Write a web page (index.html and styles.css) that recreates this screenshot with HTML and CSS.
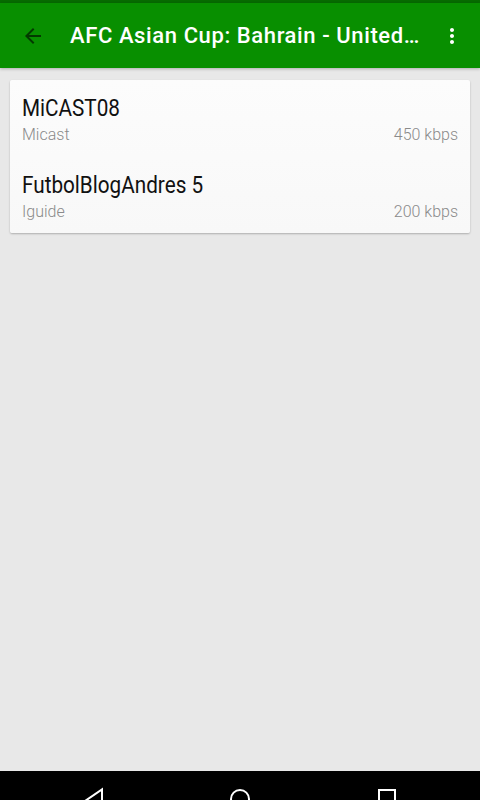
FILE: index.html
```html
<!DOCTYPE html>
<html lang="en">

<head>
    <meta charset="UTF-8">
    <meta name="viewport" content="width=device-width, initial-scale=1.0">
    <title>Streams</title>
    <link rel="stylesheet" href="styles.css">
</head>

<body>
    <div class="status-bar"></div>

    <div class="toolbar">
        <div class="nav-icon">
            <svg width="24" height="24" viewBox="0 0 24 24">
                <path d="M20 11H7.83l5.59-5.59L12 4l-8 8 8 8 1.41-1.41L7.83 13H20v-2z" fill="rgba(0,0,0,0.6)"/>
            </svg>
        </div>
        <div class="toolbar-title">AFC Asian Cup: Bahrain - United…</div>
        <div class="menu-icon">
            <svg width="24" height="24" viewBox="0 0 24 24">
                <path d="M12 8c1.1 0 2-.9 2-2s-.9-2-2-2-2 .9-2 2 .9 2 2 2zm0 2c-1.1 0-2 .9-2 2s.9 2 2 2 2-.9 2-2-.9-2-2-2zm0 6c-1.1 0-2 .9-2 2s.9 2 2 2 2-.9 2-2-.9-2-2-2z" fill="white"/>
            </svg>
        </div>
    </div>

    <div class="content">
        <div class="card">
            <div class="stream">
                <div class="stream-name">MiCAST08</div>
                <div class="stream-info">
                    <span>Micast</span>
                    <span>450 kbps</span>
                </div>
            </div>
            <div class="stream">
                <div class="stream-name">FutbolBlogAndres 5</div>
                <div class="stream-info">
                    <span>Iguide</span>
                    <span>200 kbps</span>
                </div>
            </div>
        </div>
    </div>

    <div class="nav-bar">
        <svg width="480" height="29" viewBox="0 0 480 29">
            <path d="M85 30 L102 18.5 L102 32" fill="none" stroke="white" stroke-width="2"/>
            <circle cx="240" cy="28" r="9" fill="none" stroke="white" stroke-width="2"/>
            <rect x="379" y="19" width="16" height="16" fill="none" stroke="white" stroke-width="2"/>
        </svg>
    </div>
</body>

</html>
```

FILE: styles.css
```css
* {
    box-sizing: border-box;
    margin: 0;
    padding: 0;
    font-family: Roboto, "Noto Sans", sans-serif;
}

body {
    width: 480px;
    height: 800px;
    display: flex;
    flex-direction: column;
    background: #e8e8e8;
    overflow: hidden;
}

.status-bar {
    height: 3px;
    background: #066b00;
}

.toolbar {
    height: 65px;
    display: flex;
    align-items: center;
    background: #088f00;
    box-shadow: 0 1px 3px rgba(0, 0, 0, 0.25);
    position: relative;
    z-index: 1;
}

.nav-icon {
    width: 70px;
    padding-left: 21px;
    display: flex;
}

.toolbar-title {
    flex: 1;
    color: white;
    font-size: 22px;
    font-weight: 500;
    letter-spacing: 0.6px;
    white-space: nowrap;
    padding-bottom: 1px;
}

.menu-icon {
    width: 56px;
    display: flex;
    justify-content: center;
}

.content {
    flex: 1;
    padding: 12px 10px;
}

.card {
    background: linear-gradient(#fcfcfc, #f8f8f8);
    border-radius: 2px;
    box-shadow: 0 1px 2px rgba(0, 0, 0, 0.25);
}

.stream {
    padding: 15px 12px 0 12px;
    height: 77px;
}

.stream:last-child {
    height: 76px;
}

.stream-name {
    font-size: 23px;
    color: #111;
    line-height: 28px;
    transform: scaleX(0.9);
    transform-origin: left;
}

.stream-info {
    display: flex;
    justify-content: space-between;
    font-size: 16px;
    font-weight: 300;
    color: #8a8a8a;
    line-height: 24px;
}

.nav-bar {
    height: 29px;
    background: black;
}

.nav-bar svg {
    display: block;
}
```
